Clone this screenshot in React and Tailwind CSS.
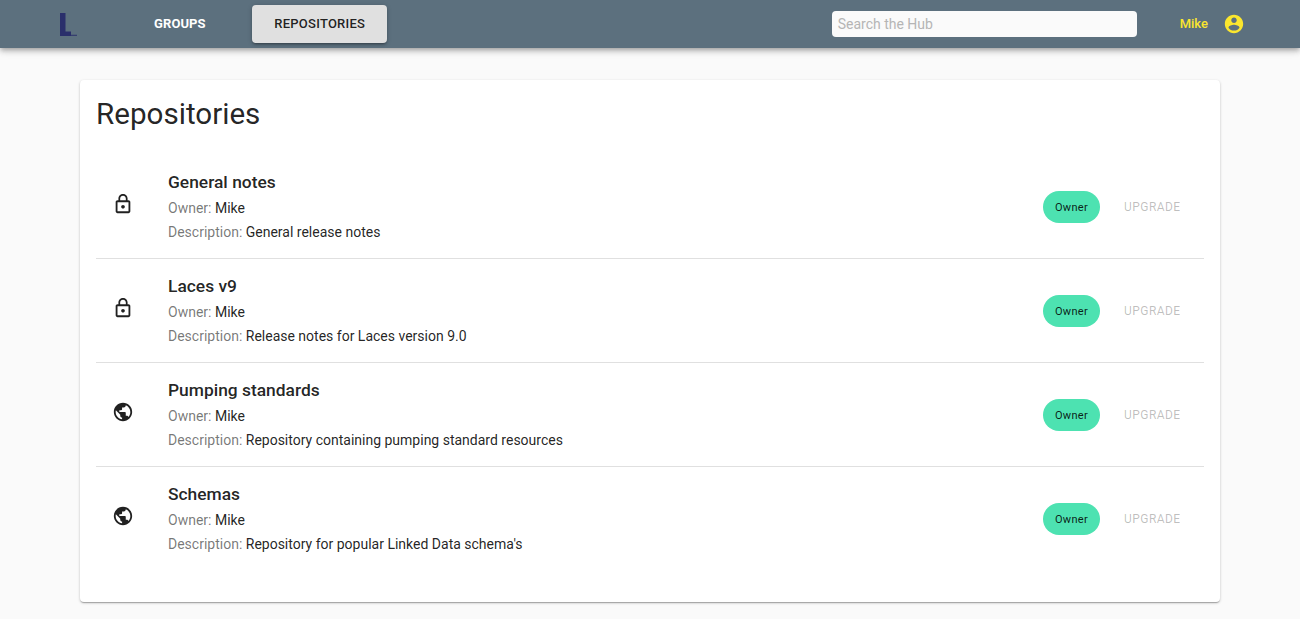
const LOCK = "M12 17c1.1 0 2-.9 2-2s-.9-2-2-2-2 .9-2 2 .9 2 2 2zm6-9h-1V6c0-2.76-2.24-5-5-5S7 3.24 7 6v2H6c-1.1 0-2 .9-2 2v10c0 1.1.9 2 2 2h12c1.1 0 2-.9 2-2V10c0-1.1-.9-2-2-2zM8.9 6c0-1.71 1.39-3.1 3.1-3.1s3.1 1.39 3.1 3.1v2H8.9V6zM18 20H6V10h12v10z";
const GLOBE = "M12 2C6.48 2 2 6.48 2 12s4.48 10 10 10 10-4.48 10-10S17.52 2 12 2zm-1 17.93c-3.95-.49-7-3.85-7-7.93 0-.62.08-1.21.21-1.79L9 15v1c0 1.1.9 2 2 2v1.93zm6.9-2.54c-.26-.81-1-1.39-1.9-1.39h-1v-3c0-.55-.45-1-1-1H8v-2h2c.55 0 1-.45 1-1V7h2c1.1 0 2-.9 2-2v-.41c2.93 1.19 5 4.06 5 7.41 0 2.08-.8 3.97-2.1 5.39z";
const USER = "M12 2C6.48 2 2 6.48 2 12s4.48 10 10 10 10-4.48 10-10S17.52 2 12 2zm0 3c1.66 0 3 1.34 3 3s-1.34 3-3 3-3-1.34-3-3 1.34-3 3-3zm0 14.2c-2.5 0-4.71-1.28-6-3.22.03-1.99 4-3.08 6-3.08 1.99 0 5.97 1.09 6 3.08-1.29 1.94-3.5 3.22-6 3.22z";

const Icon = ({ d, className }) => (
  <svg viewBox="0 0 24 24" fill="currentColor" className={className}>
    <path d={d} />
  </svg>
);

const repos = [
  { name: "General notes", desc: "General release notes", icon: LOCK },
  { name: "Laces v9", desc: "Release notes for Laces version 9.0", icon: LOCK },
  { name: "Pumping standards", desc: "Repository containing pumping standard resources", icon: GLOBE },
  { name: "Schemas", desc: "Repository for popular Linked Data schema's", icon: GLOBE },
];

function Row({ repo, last }) {
  return (
    <div className={`flex items-center h-[104px] pl-[15.5px] pr-6 ${last ? "" : "border-b border-[#e0e0e0]"}`}>
      <div className="w-[56.5px] shrink-0 flex -mt-[6px]">
        <Icon d={repo.icon} className="w-[22px] h-[22px] text-[rgba(0,0,0,0.87)]" />
      </div>
      <div className="flex-1 flex flex-col">
        <div className="text-[17.4px] font-medium leading-[24px] mb-[2px] text-[rgba(0,0,0,0.87)]">{repo.name}</div>
        <div className="text-sm leading-[24px] text-[rgba(0,0,0,0.54)]">
          Owner: <span className="text-[rgba(0,0,0,0.87)]">Mike</span>
        </div>
        <div className="text-sm leading-[24px] text-[rgba(0,0,0,0.54)]">
          Description: <span className="text-[rgba(0,0,0,0.87)]">{repo.desc}</span>
        </div>
      </div>
      <div className="flex items-center h-8 w-[57px] justify-center rounded-2xl bg-[#4de2b1] text-[11px] leading-[32px] pt-[2px] tracking-[0.3px] text-[rgba(0,0,0,0.87)]">
        Owner
      </div>
      <div className="ml-6 w-[56px] text-xs font-normal tracking-[0.45px] text-[rgba(0,0,0,0.26)]">UPGRADE</div>
    </div>
  );
}

export default function App() {
  return (
    <div className="min-h-[619px] bg-[#fafafa] font-['Roboto',sans-serif]">
      <header className="h-12 bg-[#5c707e] flex items-center shadow-[0_2px_4px_-1px_rgba(0,0,0,0.2),0_4px_5px_0_rgba(0,0,0,0.14),0_1px_10px_0_rgba(0,0,0,0.12)]">
        <svg viewBox="0 0 17 23" className="ml-[60px] w-[17px] h-[23px] text-[#2a2f6b]" fill="currentColor">
          <path d="M0 0h5.5v18.5H11V23H0z" />
          <path d="M11 21.7h6V23h-6z" opacity="0.75" />
        </svg>
        <div className="ml-[77px] text-[13px] font-bold tracking-[0.1px] text-white">GROUPS</div>
        <div className="ml-[46px] w-[135px] h-[38px] pl-[1px] flex items-center justify-center rounded bg-[#e0e0e0] text-[13px] font-medium tracking-[0.25px] text-[rgba(0,0,0,0.87)] shadow-[0_1px_5px_0_rgba(0,0,0,0.2),0_2px_2px_0_rgba(0,0,0,0.14),0_3px_1px_-2px_rgba(0,0,0,0.12)]">
          REPOSITORIES
        </div>
        <div className="ml-auto w-[305px] h-[26px] flex items-center pl-[6px] rounded bg-[#fafafa] text-sm text-[#b5b5b5]">
          Search the Hub
        </div>
        <div className="ml-[43px] text-[13px] font-medium text-[#fbe62e]">Mike</div>
        <Icon d={USER} className="ml-[15px] mr-[55px] w-[22px] h-[22px] text-[#fbe62e]" />
      </header>
      <main className="px-20 pt-8 pb-[17px]">
        <section className="h-[522px] bg-white rounded px-4 pt-4 shadow-[0_1px_3px_0_rgba(0,0,0,0.2),0_1px_1px_0_rgba(0,0,0,0.14),0_2px_1px_-1px_rgba(0,0,0,0.12)]">
          <h1 className="text-[29.6px] leading-9 text-[rgba(0,0,0,0.87)]">Repositories</h1>
          <div className="mt-[23px]">
            {repos.map((r, i) => (
              <Row key={r.name} repo={r} last={i === repos.length - 1} />
            ))}
          </div>
        </section>
      </main>
    </div>
  );
}
